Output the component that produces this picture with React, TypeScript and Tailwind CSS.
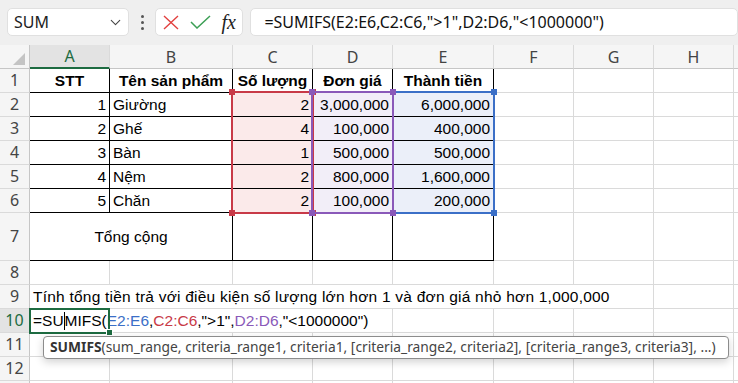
import React from "react";
import { ChevronDown } from "lucide-react";

const UI = "font-['Noto_Sans',sans-serif]";
const CF = "font-['Liberation_Sans',Arial,sans-serif]";

const G = "border-r-[#dadada] border-b-[#dadada]";
const K = "border-r-black border-b-black";

function Cell({ children, cls = "" }: { children?: React.ReactNode; cls?: string }) {
  return (
    <div className={"flex items-center px-[3px] border-r border-b whitespace-nowrap leading-[23px] text-[15.5px] text-black " + CF + " " + cls}>
      {children}
    </div>
  );
}

function RowHead({ n, active = false }: { n?: number; active?: boolean }) {
  return (
    <div
      className={
        "flex items-center justify-center border-r border-b border-r-[#c6c6c6] border-b-[#dadada] text-[16px] leading-[23px] " +
        UI +
        (active ? " bg-[#e3e3e3] text-[#1d6b41]" : " bg-[#f5f5f5] text-[#444444]")
      }
    >
      {n}
    </div>
  );
}

function ColHead({ l, active = false }: { l: string; active?: boolean }) {
  return (
    <div
      className={
        "flex items-center justify-center border-r border-r-[#dadada] text-[16px] leading-[22px] " +
        UI +
        (active
          ? " bg-[#e3e3e3] text-[#1d6b41] border-b-2 border-b-[#1d6b41]"
          : " bg-[#f5f5f5] text-[#444444] border-b border-b-[#c6c6c6]")
      }
    >
      {l}
    </div>
  );
}

function Empties({ n }: { n: number }) {
  return (
    <>
      {Array.from({ length: n }).map((_, i) => (
        <Cell key={i} cls={G} />
      ))}
    </>
  );
}

const data = [
  { stt: 1, name: "Giường", qty: 2, price: "3,000,000", total: "6,000,000" },
  { stt: 2, name: "Ghế", qty: 4, price: "100,000", total: "400,000" },
  { stt: 3, name: "Bàn", qty: 1, price: "500,000", total: "500,000" },
  { stt: 4, name: "Nệm", qty: 2, price: "800,000", total: "1,600,000" },
  { stt: 5, name: "Chăn", qty: 2, price: "100,000", total: "200,000" },
];

function RangeBox({ cls, handle, left, width }: { cls: string; handle: string; left: string; width: string }) {
  return (
    <div className={"absolute top-[91px] h-[123px] border-2 pointer-events-none " + cls + " " + left + " " + width}>
      <div className={"absolute -left-[4px] -top-[4px] w-[6px] h-[6px] " + handle} />
      <div className={"absolute -right-[4px] -top-[4px] w-[6px] h-[6px] " + handle} />
      <div className={"absolute -left-[4px] -bottom-[4px] w-[6px] h-[6px] " + handle} />
      <div className={"absolute -right-[4px] -bottom-[4px] w-[6px] h-[6px] " + handle} />
    </div>
  );
}

export default function App() {
  return (
    <div className="relative w-[738px] h-[383px] overflow-hidden bg-white">
      {/* Toolbar */}
      <div className={"h-[45px] bg-[#efefef] flex items-start pt-[8px] pl-[7px] " + UI}>
        <div className="w-[125px] h-[28px] bg-white rounded-[5px] border border-[#e0e0e0] flex items-center justify-between pl-[6px] pr-[4px]">
          <span className="text-[16px] text-[#222]">SUM</span>
          <ChevronDown size={17} strokeWidth={1.5} className="text-[#444]" />
        </div>
        <div className="w-[27px] h-[28px] flex flex-col items-center justify-center gap-[3px]">
          <div className="w-[3px] h-[3px] rounded-full bg-[#555]" />
          <div className="w-[3px] h-[3px] rounded-full bg-[#555]" />
          <div className="w-[3px] h-[3px] rounded-full bg-[#555]" />
        </div>
        <div className="w-[90px] h-[28px] bg-white rounded-[5px] border border-[#e0e0e0] flex items-center pl-[7px]">
          <svg width="16" height="15" viewBox="0 0 16 15" className="mr-[11px]">
            <path d="M1 1 L15 14 M15 1 L1 14" stroke="#e2403f" strokeWidth="1.4" fill="none" />
          </svg>
          <svg width="21" height="14" viewBox="0 0 21 14" className="mr-[10px]">
            <path d="M1 7 L7 13 L20 1" stroke="#3c9f55" strokeWidth="1.5" fill="none" />
          </svg>
          <span className="font-['Liberation_Serif',serif] italic text-[20px] leading-[20px] text-[#222]">fx</span>
        </div>
        <div className="ml-[7px] w-[500px] h-[28px] bg-white rounded-[5px] border border-[#e0e0e0] flex items-center pl-[13px]">
          <span className="text-[16px] text-[#111] whitespace-nowrap">=SUMIFS(E2:E6,C2:C6,"&gt;1",D2:D6,"&lt;1000000")</span>
        </div>
      </div>

      {/* Grid */}
      <div className="grid grid-cols-[30px_80px_123px_80px_80px_101px_80px_80px_80px_1fr] grid-rows-[24px_repeat(6,24px)_48px_repeat(6,24px)]">
        {/* header */}
        <div className="bg-[#f5f5f5] border-r border-b border-r-[#c6c6c6] border-b-[#c6c6c6] relative">
          <svg width="30" height="24" viewBox="0 0 30 24" className="absolute left-0 top-0">
            <polygon points="25,8 25,20 13,20" fill="#c4c4c4" />
          </svg>
        </div>
        <ColHead l="A" active />
        <ColHead l="B" />
        <ColHead l="C" />
        <ColHead l="D" />
        <ColHead l="E" />
        <ColHead l="F" />
        <ColHead l="G" />
        <ColHead l="H" />
        <ColHead l="" />

        {/* row 1 */}
        <RowHead n={1} />
        <Cell cls={K + " justify-center font-bold"}>STT</Cell>
        <Cell cls={K + " justify-center font-bold"}>Tên sản phẩm</Cell>
        <Cell cls={K + " justify-center font-bold"}>Số lượng</Cell>
        <Cell cls={K + " justify-center font-bold"}>Đơn giá</Cell>
        <Cell cls={K + " justify-center font-bold"}>Thành tiền</Cell>
        <Empties n={4} />

        {data.map((d, i) => (
          <React.Fragment key={d.stt}>
            <RowHead n={i + 2} />
            <Cell cls={K + " justify-end"}>{d.stt}</Cell>
            <Cell cls={K}>{d.name}</Cell>
            <Cell cls={K + " justify-end bg-[#fbeaea]"}>{d.qty}</Cell>
            <Cell cls={K + " justify-end bg-[#f2eef8]"}>{d.price}</Cell>
            <Cell cls={K + " justify-end bg-[#ebeff9]"}>{d.total}</Cell>
            <Empties n={4} />
          </React.Fragment>
        ))}

        {/* row 7 */}
        <RowHead n={7} />
        <Cell cls={K + " col-span-2 justify-center"}>Tổng cộng</Cell>
        <Cell cls={K} />
        <Cell cls={K} />
        <Cell cls={K} />
        <Empties n={4} />

        {/* row 8 */}
        <RowHead n={8} />
        <Empties n={9} />

        {/* row 9 */}
        <RowHead n={9} />
        <Cell cls={G + " col-span-7 tracking-[0.22px]"}>Tính tổng tiền trả với điều kiện số lượng lớn hơn 1 và đơn giá nhỏ hơn 1,000,000</Cell>
        <Empties n={2} />

        {/* row 10 */}
        <RowHead n={10} active />
        <Cell cls={G + " col-span-4"}>
          =SU
          <span className="inline-block w-[1px] h-[18px] bg-black" />
          MIFS(
          <span className="text-[#3b6fc7]">E2:E6</span>,
          <span className="text-[#c83a48]">C2:C6</span>,"&gt;1",
          <span className="text-[#8a59b9]">D2:D6</span>,"&lt;1000000")
        </Cell>
        <Empties n={5} />

        {/* rows 11-13 */}
        <RowHead n={11} />
        <Empties n={9} />
        <RowHead n={12} />
        <Empties n={9} />
        <RowHead />
        <Empties n={9} />
      </div>

      {/* range highlights */}
      <RangeBox cls="border-[#c83a48]" handle="bg-[#c83a48]" left="left-[231px]" width="w-[83px]" />
      <RangeBox cls="border-[#3b6fc7]" handle="bg-[#3b6fc7]" left="left-[392px]" width="w-[103px]" />
      <RangeBox cls="border-[#8a59b9]" handle="bg-[#8a59b9]" left="left-[311px]" width="w-[83px]" />

      {/* active cell */}
      <div className="absolute left-[29px] top-[308px] w-[81px] h-[26px] border-2 border-[#1d6b41] pointer-events-none" />
      <div className="absolute left-[106px] top-[329px] w-[7px] h-[7px] bg-[#1d6b41] border border-white pointer-events-none" />

      {/* tooltip */}
      <div className={"absolute left-[43px] top-[336px] w-[686px] h-[23px] bg-white border border-[#8c8c8c] rounded-[4px] shadow-[0_3px_8px_rgba(0,0,0,0.18)] flex items-center pl-[6px] text-[13.8px] text-[#444] whitespace-nowrap " + UI}>
        <span className="font-bold text-[#333]">SUMIFS</span>
        <span>(sum_range, criteria_range1, criteria1, [criteria_range2, criteria2], [criteria_range3, criteria3], ...)</span>
      </div>
    </div>
  );
}
